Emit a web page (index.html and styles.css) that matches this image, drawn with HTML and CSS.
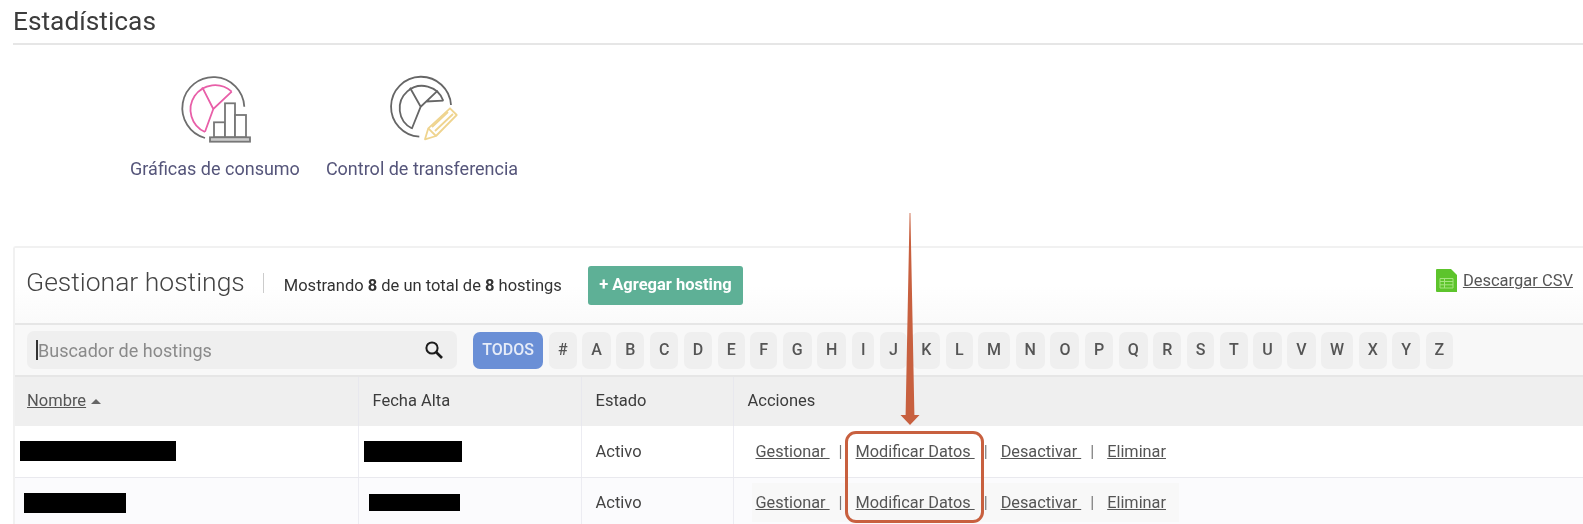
FILE: index.html
```html
<!DOCTYPE html>
<html lang="es">
<head>
<meta charset="utf-8">
<title>Estadísticas</title>
<link rel="stylesheet" href="styles.css">
</head>
<body>
<main class="page">
  <h2 class="title">Estadísticas</h2>
  <div class="tiles">
    <a class="tile tile-a">
      <svg class="tile-icon" viewBox="0 0 80 75" width="80" height="75">
        <g fill="none" stroke="#6e6e6e" stroke-width="1.8">
          <path d="M69.3 36.7A31 31 0 1 0 30 68"/>
        </g>
        <g fill="none" stroke="#e85fa8" stroke-width="1.8">
          <path d="M56.7 21.7A24.5 24.5 0 1 0 30 62"/>
          <path d="M27.3 17.3L38.3 39L56.7 21.7M38.3 39L30 61.7"/>
        </g>
        <g fill="#fff" stroke="#777" stroke-width="1.8">
          <rect x="39" y="52.3" width="11" height="15"/>
          <rect x="50" y="33.3" width="10" height="34"/>
          <rect x="60" y="45" width="11" height="22.3"/>
          <rect x="35" y="67.3" width="40" height="4.4" fill="#ccc"/>
        </g>
      </svg>
      <span>Gráficas de consumo</span>
    </a>
    <a class="tile tile-b">
      <svg class="tile-icon" viewBox="0 0 80 75" width="80" height="75">
        <g fill="none" stroke="#666" stroke-width="1.8">
          <path d="M69 35A30 30 0 1 0 37.3 66.7"/>
          <path d="M61.3 30.7A22.5 22.5 0 1 0 29.7 58.3"/>
          <path d="M28 17.7L38.7 36.7L55.7 20.7M44 31.5L61.3 30.7M38.7 36.7L29.7 59"/>
        </g>
        <g fill="#fff" stroke="#efd48f" stroke-width="1.8" stroke-linejoin="round">
          <path d="M43 69.3L46.3 58.3L68 38.3L74.7 45L54 66Z"/>
          <path d="M46.3 58.3L54 66M50 57L66 42M53 61L71 44" fill="none"/>
        </g>
      </svg>
      <span>Control de transferencia</span>
    </a>
  </div>

  <section class="card">
    <header class="card-head">
      <h3 class="card-title">Gestionar hostings</h3>
      <p class="count">Mostrando <b>8</b> de un total de <b>8</b> hostings</p>
      <a class="add">+ Agregar hosting</a>
      <a class="csv">
        <svg viewBox="0 0 21 23" width="21" height="23">
          <path d="M1 0H15L21 6V23H1Q0 23 0 22V1Q0 0 1 0Z" fill="#5dc42c"/>
          <path d="M4 9.5H17V19H4ZM4 12.5H17M4 15.8H17M8.5 9.5V19" fill="none" stroke="#a5e57f" stroke-width="1"/>
        </svg>
        <span>Descargar CSV</span>
      </a>
    </header>

    <div class="filters">
      <div class="search">
        <span class="caret"></span>
        <span class="placeholder">Buscador de hostings</span>
        <svg viewBox="0 0 20 20" width="20" height="20">
          <circle cx="8" cy="8" r="5.6" fill="none" stroke="#1c1c1c" stroke-width="2"/>
          <path d="M12 12L18 18" stroke="#1c1c1c" stroke-width="2.6"/>
        </svg>
      </div>
      <nav class="letters">
        <a class="letter all">TODOS</a>
        <a class="letter">#</a><a class="letter">A</a><a class="letter">B</a><a class="letter">C</a><a class="letter">D</a><a class="letter">E</a><a class="letter">F</a><a class="letter">G</a><a class="letter">H</a><a class="letter">I</a><a class="letter">J</a><a class="letter">K</a><a class="letter">L</a><a class="letter">M</a><a class="letter">N</a><a class="letter">O</a><a class="letter">P</a><a class="letter">Q</a><a class="letter">R</a><a class="letter">S</a><a class="letter">T</a><a class="letter">U</a><a class="letter">V</a><a class="letter">W</a><a class="letter">X</a><a class="letter">Y</a><a class="letter">Z</a>
      </nav>
    </div>

    <table class="grid">
      <colgroup>
        <col class="c-name"><col class="c-date"><col class="c-state"><col>
      </colgroup>
      <thead>
        <tr>
          <th><a class="sort">Nombre</a><span class="tri"></span></th>
          <th>Fecha Alta</th>
          <th>Estado</th>
          <th>Acciones</th>
        </tr>
      </thead>
      <tbody>
        <tr>
          <td class="redacted"><span class="bar bar-n1"></span></td>
          <td class="redacted"><span class="bar bar-d1"></span></td>
          <td>Activo</td>
          <td class="actions">
            <div class="links"><a>Gestionar&nbsp;</a><i>|</i><a>Modificar Datos&nbsp;</a><i>|</i><a>Desactivar&nbsp;</a><i>|</i><a>Eliminar</a></div>
          </td>
        </tr>
        <tr class="alt">
          <td class="redacted"><span class="bar bar-n2"></span></td>
          <td class="redacted"><span class="bar bar-d2"></span></td>
          <td>Activo</td>
          <td class="actions">
            <div class="links"><a>Gestionar&nbsp;</a><i>|</i><a>Modificar Datos&nbsp;</a><i>|</i><a>Desactivar&nbsp;</a><i>|</i><a>Eliminar</a></div>
          </td>
        </tr>
      </tbody>
    </table>
  </section>

  <svg class="arrow" viewBox="0 0 24 214" width="24" height="214">
    <path d="M11.6 0L7.6 202H2.5L12 212L21.5 202H16.4L12.4 0Z" fill="#c8603f"/>
  </svg>
  <div class="callout"></div>
</main>
</body>
</html>
```
FILE: styles.css
```css
* { box-sizing: border-box; }
html, body { margin: 0; height: 524px; overflow: hidden; background: #fff; }
body { font-family: Roboto, "Liberation Sans", sans-serif; color: #444; }
.page { position: relative; height: 524px; overflow: hidden; padding: 0 0 0 13px; filter: blur(0.5px); }
.title { margin: 0; height: 45px; font-size: 26.3px; font-weight: 400; line-height: 42px; color: #3c3c3c; border-bottom: 2px solid #e6e6e6; }
.tiles { display: flex; height: 201px; padding: 25px 0 0 117px; }
.tile { display: flex; flex-direction: column; align-items: center; font-size: 18px; color: #55557a; white-space: nowrap; }
.tile-a { width: 170px; margin-right: 26px; }
.tile-b { width: 192px; }
.tile-icon { display: block; margin-bottom: 13px; }
.card { border: 2px solid #f1f1f1; border-right: 0; border-bottom: 0; border-radius: 3px 0 0 0; }
.card-head { display: flex; align-items: center; height: 77px; padding: 0 10px 6px 11px; background: linear-gradient(#fff 50%, #fafafa); border-bottom: 2px solid #e6e6e6; }
.card-title { margin: 0 0 2px; padding-right: 19px; font-size: 26.5px; font-weight: 300; color: #444; position: relative; }
.card-title::after { content: ""; position: absolute; right: 0; top: 7px; height: 20px; border-right: 1px solid #ccc; }
.count { margin: 6px 0 0 20px; font-size: 16.5px; color: #333; }
.count b { font-weight: 700; }
.add { margin: 6px 0 0 26px; width: 155px; height: 39px; line-height: 38px; text-align: center; background: #5eb096; color: #fff; font-size: 16.5px; font-weight: 700; border-radius: 3px; }
.csv { margin: 0 0 4px auto; display: flex; align-items: center; gap: 6px; font-size: 16.5px; color: #555; }
.csv span { text-decoration: underline; }
.filters { display: flex; align-items: center; gap: 16px; height: 52px; padding-left: 12px; background: #f8f8f8; border-bottom: 2px solid #e6e6e6; }
.search { display: flex; align-items: center; width: 430px; height: 38px; padding: 0 13px 0 9px; background: #efefef; border-radius: 7px; }
.caret { width: 2px; height: 20px; background: #333; }
.placeholder { flex: 1; font-size: 18px; color: #8a8a8a; }
.letters { display: flex; gap: 5.5px; }
.letter { height: 37px; padding: 0 9px; line-height: 36px; font-size: 16px; font-weight: 500; color: #555; background: #efefef; border-radius: 7px; }
.letter.all { width: 70px; margin-right: 0.5px; padding: 0; text-align: center; background: #6a8fd6; color: #e6ecf8; }
.grid { width: 100%; table-layout: fixed; border-collapse: collapse; font-size: 16.5px; }
.c-name { width: 343px; }
.c-date { width: 223px; }
.c-state { width: 152px; }
.grid th { height: 49px; padding: 0 14px 2px; text-align: left; font-weight: 400; font-size: 16.5px; color: #3c3c3c; background: #efefef; border-right: 1px solid #e8e8ee; }
.grid th:first-child { padding-left: 12px; }
.grid td { height: 51px; padding: 0 14px; color: #444; border-right: 1px solid #ececf2; border-bottom: 1px solid #e9e9ee; }
.grid th:last-child, .grid td:last-child { border-right: 0; }
.sort { font-weight: 400; color: #555; text-decoration: underline; }
.tri { display: inline-block; margin-left: 5px; vertical-align: 2px; border: 5px solid transparent; border-top: 0; border-bottom: 5px solid #666; }
.alt td { background: #fbfbfd; }
.grid td.redacted { position: relative; padding: 0; }
.bar { display: block; background: #000; }
.bar-n1 { width: 156px; height: 20px; margin: 0 0 0 5px; }
.bar-d1 { width: 98px; height: 21px; margin: 0 0 0 5px; }
.bar-n2 { width: 102px; height: 20px; margin: 0 0 0 9px; }
.bar-d2 { width: 91px; height: 17px; margin: 0 0 0 10px; }
.grid td.actions { padding: 0 0 0 18px; }
.links { display: flex; align-items: center; width: 427px; height: 39px; padding-left: 4px; font-size: 16.3px; color: #555; }
.links a { text-decoration: underline; }
.links i { margin: 0 13px 0 9px; font-style: normal; color: #777; }
.alt .links { background: #f8f8f8; }
.arrow { position: absolute; left: 898px; top: 213px; }
.callout { position: absolute; left: 845px; top: 431px; width: 139px; height: 92px; border: 3px solid #c8603f; border-radius: 11px; }
```
